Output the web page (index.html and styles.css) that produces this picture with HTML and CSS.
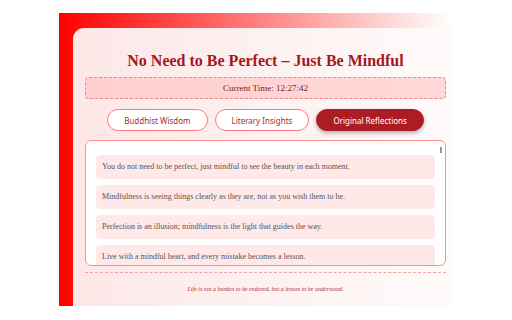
FILE: index.html
```html
<!DOCTYPE html>
<html>
<head>
<meta charset="utf-8">
<link rel="stylesheet" href="styles.css">
</head>
<body>
<div class="frame">
  <div class="card">
    <h1 class="title">No Need to Be Perfect – Just Be Mindful</h1>
    <div class="clock">Current Time: 12:27:42</div>
    <div class="tabs">
      <button class="tab">Buddhist Wisdom</button>
      <button class="tab">Literary Insights</button>
      <button class="tab active">Original Reflections</button>
    </div>
    <div class="quotes">
      <div class="quote-list">
        <div class="quote">You do not need to be perfect, just mindful to see the beauty in each moment.</div>
        <div class="quote">Mindfulness is seeing things clearly as they are, not as you wish them to be.</div>
        <div class="quote">Perfection is an illusion; mindfulness is the light that guides the way.</div>
        <div class="quote">Live with a mindful heart, and every mistake becomes a lesson.</div>
      </div>
      <div class="thumb"></div>
    </div>
    <div class="divider"></div>
    <p class="footer">Life is not a burden to be endured, but a lesson to be understood.</p>
  </div>
</div>
</body>
</html>
```
FILE: styles.css
```css
html, body { margin: 0; padding: 0; background: #fff; }
body { padding: 13px 0 0 59px; }
.frame {
  width: 394px;
  height: 293px;
  overflow: hidden;
  padding: 15px 0 0 14px;
  box-sizing: border-box;
  background: linear-gradient(to right, #ff0000 0%, #ff4a4a 30%, #ffb3b3 70%, #ffffff 100%);
}
.card {
  width: 385px;
  height: 278px;
  box-sizing: border-box;
  padding: 21px 12px 0 12px;
  border-radius: 11px 0 0 0;
  background: linear-gradient(to right, #fde7e7 0%, #fdf1f1 50%, #fffbfb 100%);
  font-family: "Liberation Serif", serif;
}
.title {
  margin: 0;
  text-align: center;
  font-size: 16px;
  line-height: 23px;
  font-weight: bold;
  color: #a8161d;
}
.clock {
  margin-top: 5px;
  height: 22px;
  box-sizing: border-box;
  border: 1px dashed #f08a8a;
  border-radius: 4px;
  background: linear-gradient(to right, #ffcfcf, #ffd8d8);
  text-align: center;
  font-size: 9px;
  line-height: 20px;
  color: #7a1a1a;
}
.tabs {
  display: flex;
  justify-content: center;
  gap: 7px;
  margin-top: 10px;
}
.tab {
  height: 22px;
  padding: 0 16px;
  border: 1px solid #ff7a7a;
  border-radius: 11px;
  background: #fff;
  color: #a42c2c;
  font-family: "Noto Sans", sans-serif;
  font-size: 8px;
}
.tab.active {
  background: #ad1c22;
  border-color: #ad1c22;
  color: #fff;
  box-shadow: 0 2px 4px rgba(0,0,0,0.3);
}
.quotes {
  position: relative;
  margin-top: 9px;
  height: 126px;
  box-sizing: border-box;
  border: 1px solid #ff8f8f;
  border-radius: 6px;
  background: #fff;
  overflow: hidden;
}
.quote-list {
  display: flex;
  flex-direction: column;
  gap: 6px;
  padding: 14px 10px 0 10px;
}
.quote {
  height: 24px;
  flex: none;
  border-radius: 4px;
  background: #ffe8e8;
  padding-left: 6px;
  font-size: 8px;
  line-height: 24px;
  color: #555;
}
.thumb {
  position: absolute;
  right: 3px;
  top: 6px;
  width: 2px;
  height: 6px;
  background: #999;
}
.divider {
  margin-top: 6px;
  border-top: 1px dashed #f5a0a0;
}
.footer {
  margin: 11px 0 0;
  text-align: center;
  font-style: italic;
  font-size: 6px;
  line-height: 10px;
  color: #b0303a;
}
```
